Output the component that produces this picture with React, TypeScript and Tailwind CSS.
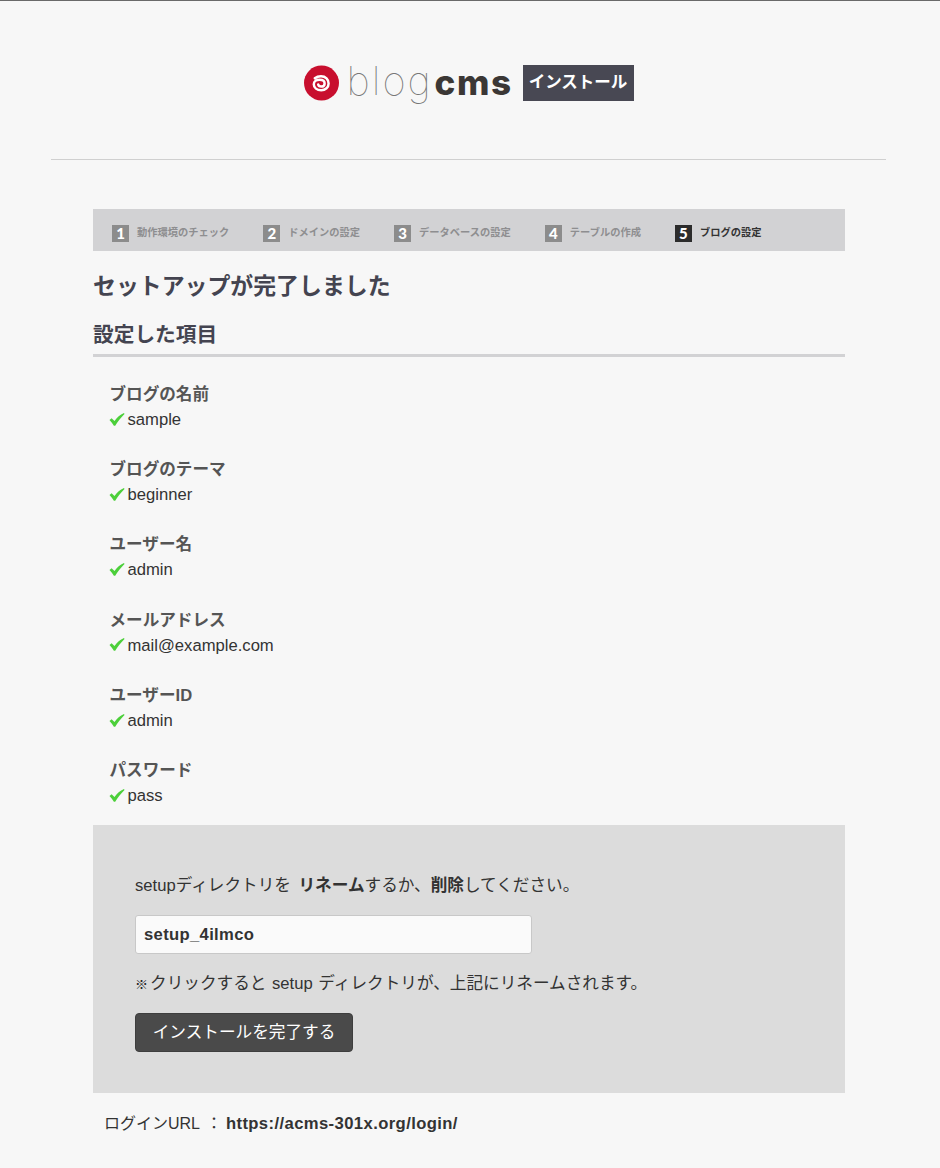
const sans = "font-['Liberation_Sans','Noto_Sans_CJK_JP',sans-serif]";

const steps = [
  { n: "1", label: "動作環境のチェック" },
  { n: "2", label: "ドメインの設定" },
  { n: "3", label: "データベースの設定" },
  { n: "4", label: "テーブルの作成" },
  { n: "5", label: "ブログの設定", active: true },
];

const items = [
  ["ブログの名前", "sample"],
  ["ブログのテーマ", "beginner"],
  ["ユーザー名", "admin"],
  ["メールアドレス", "mail@example.com"],
  ["ユーザーID", "admin"],
  ["パスワード", "pass"],
];

function Check() {
  return (
    <svg width="16" height="14" viewBox="0 0 16 14" className="shrink-0 -translate-y-[0.5px]" aria-hidden="true">
      <path d="M0.5 7.6 L2.6 5.8 L5.5 8.4 C8 5 11 2.4 15 0.6 L15.5 1.4 C12 4.8 9 8.6 6.2 13.2 L4.9 13.2 C3.6 11.2 2.2 9.2 0.5 7.6 Z" fill="#4ccf3a" />
    </svg>
  );
}

function Logo() {
  return (
    <div className="flex items-center">
      <svg width="36" height="36" viewBox="0 0 36 36" aria-hidden="true" className="shrink-0">
        <circle cx="17.5" cy="18" r="17.5" fill="#c80f2e" />
        <path d="M10.8 13.2 C12.6 11.8 14.8 11.2 17 11.2 C21.6 11.2 24.6 14.4 24.6 18.4 C24.6 22.4 21.4 25.2 17.2 25.2 C13 25.2 9.8 22.8 9.8 19.2 C9.8 16.2 12.6 14.8 15.6 14.8 C18.8 14.8 20.6 16.4 20.6 18.4 C20.6 20.4 19 21.6 17.2 21.6 C15.6 21.6 14.4 20.8 14.2 19.4" fill="none" stroke="#fff" strokeWidth="2.5" strokeLinecap="round" />
      </svg>
      <span className="ml-[7px] w-[88px] font-['Inter',sans-serif] font-thin text-[40px] leading-[36px] tracking-[2px] text-[#777777] -translate-y-[2px]">blog</span>
      <span className="w-[88px] font-['Inter',sans-serif] font-extrabold text-[35px] leading-[36px] tracking-[1.6px] text-[#3b3735] -translate-y-[1px]">cms</span>
      <span className="w-[111px] h-[36px] bg-[#484853] text-white font-bold text-[16.5px] flex items-center justify-center">インストール</span>
    </div>
  );
}

export default function App() {
  return (
    <div className={`min-h-[1168px] bg-[#f7f7f7] border-t border-[#6a6a6a] ${sans} text-[16.64px] leading-[25.6px] text-[#333333]`}>
      <header className="ml-[51px] w-[835px] h-[159px] border-b border-[#d0d0d0] pt-[64px] flex justify-center items-start">
        <Logo />
      </header>

      <main className="ml-[93px] w-[752px] pt-[49px]">
        <ol className="h-[42px] bg-[#d2d2d4] pl-[19px] pt-[6px] flex items-center gap-[34px]">
          {steps.map((s) => (
            <li key={s.n} className="flex items-center gap-[8px]">
              <span className={`w-[17px] h-[17px] flex items-center justify-center text-white font-['Lato',sans-serif] font-black text-[15px] leading-none ${s.active ? "bg-[#2c2c2c]" : "bg-[#8c8c8c]"}`}>
                {s.n}
              </span>
              <span className={`font-bold text-[10.25px] leading-none ${s.active ? "text-[#333333]" : "text-[#8e8e90]"}`}>{s.label}</span>
            </li>
          ))}
        </ol>

        <h1 className="mt-[18px] text-[22.9px] leading-[34px] font-bold text-[#444450]">セットアップが完了しました</h1>

        <h2 className="mt-[15px] h-[39px] border-b-[3px] border-[#d2d2d4] text-[20.7px] leading-[33px] font-bold text-[#444450]">設定した項目</h2>

        <dl className="pl-[16.5px] pt-[25px] flex flex-col gap-[24.5px]">
          {items.map(([k, v]) => (
            <div key={k}>
              <dt className="font-bold text-[16.6px] text-[#555555]">{k}</dt>
              <dd className="flex items-center gap-[3px] -ml-[1px] -mt-[0.5px]">
                <Check />
                <span>{v}</span>
              </dd>
            </div>
          ))}
        </dl>

        <section className="mt-[16.5px] h-[268px] bg-[#dcdcdc] pl-[42px] pt-[48px]">
          <p>
            setupディレクトリを <strong className="ml-[3px] font-bold">リネーム</strong>するか、<strong className="font-bold">削除</strong>してください。
          </p>
          <input
            readOnly
            value="setup_4ilmco"
            className="block mt-[16px] w-[397px] h-[39px] px-[8px] pt-[1px] bg-[#fafafa] border border-[#c8c8c8] rounded-[3px] font-bold text-[16.64px] tracking-[0.33px] text-[#333333]"
          />
          <p className="mt-[17px] [word-spacing:1px]">
            <span className="text-[13px] font-bold mr-[2px] text-[#222222]">※</span>クリックすると setup ディレクトリが、上記にリネームされます。
          </p>
          <button className="block mt-[16px] w-[218px] h-[39px] bg-[#4a4a4a] border border-[#3e3e3e] rounded-[4px] text-white text-[16.64px]">
            インストールを完了する
          </button>
        </section>

        <p className="mt-[18px] pl-[11px] text-[16px]">
          ログインURL <span className="ml-[2px]">：</span><strong className="ml-[4px] font-bold text-[16.64px] tracking-[0.4px]">https://acms-301x.org/login/</strong>
        </p>
      </main>
    </div>
  );
}
